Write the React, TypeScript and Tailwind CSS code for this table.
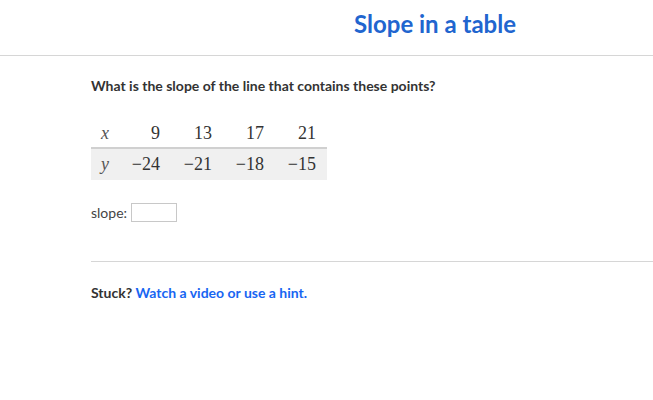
const xs = [9, 13, 17, 21];
const ys = ['\u221224', '\u221221', '\u221218', '\u221215'];

export default function App() {
  return (
    <div className="w-[653px] h-[400px] bg-white font-['Lato',sans-serif] text-[#21242c]">
      <header className="h-[56px] border-b border-[#d6d6d6] pl-[354px] pt-[8px]">
        <h1 className="text-[24px] font-bold leading-[32px] text-[#2165cf]">Slope in a table</h1>
      </header>

      <div className="pl-[91px]">
        <p className="mt-[20px] text-[14px] font-bold leading-[20px] text-[#333]">
          What is the slope of the line that contains these points?
        </p>

        <table className="mt-[24px] border-collapse font-['Liberation_Serif',serif] text-[18px] text-[#333]">
          <tbody>
            <tr className="h-[27px] border-b-2 border-[#d0d0d0]">
              <td className="pl-[10px] pr-[10px] italic text-[#555]">x</td>
              {xs.map((v) => (
                <td key={v} className="w-[52px] pr-[11px] text-right">{v}</td>
              ))}
            </tr>
            <tr className="h-[32px] bg-[#f0f0f0]">
              <td className="pl-[10px] pr-[10px] italic text-[#555]">y</td>
              {ys.map((v) => (
                <td key={v} className="w-[52px] pr-[11px] text-right">{v}</td>
              ))}
            </tr>
          </tbody>
        </table>

        <div className="mt-[22px] flex items-center gap-[4px] text-[14px] text-[#444]">
          <span>slope:</span>
          <div className="w-[46px] h-[19px] border border-[#c8c8c8] bg-white" />
        </div>

        <div className="mt-[38px] border-t border-[#d6d6d6]" />

        <p className="mt-[20px] text-[14px] font-bold text-[#333]">
          Stuck? <span className="text-[#1865f2]">Watch a video or use a hint.</span>
        </p>
      </div>
    </div>
  );
}
